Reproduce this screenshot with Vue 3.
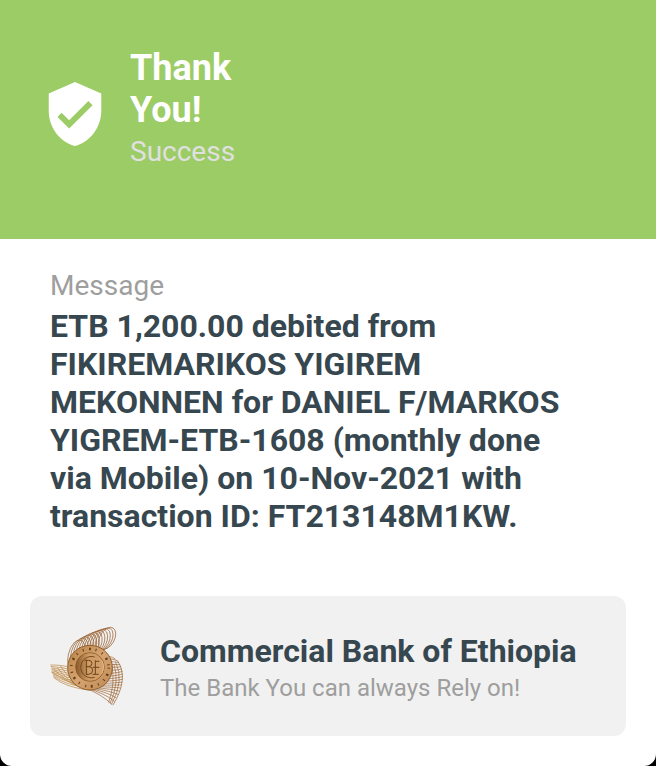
<script setup>
const mix = (a, b, t) => a + (b - a) * t
const steps = (n) => Array.from({ length: n }, (_, i) => i / (n - 1))

// Upper coil: overlapping tilted loops that climb to the right
const coil = steps(12).map((t) => {
  const cx = mix(110, 201, t)
  const cy = mix(122, 70, t) - 22 * t * (1 - t)
  return {
    cx,
    cy,
    rx: mix(25, 22, t),
    ry: mix(48, 36, t),
    turn: `rotate(${mix(14, 30, t)} ${cx} ${cy})`
  }
})

// Right fan: strands from the coin's rim to a curved outer edge
const rightFan = steps(18).map((t) => {
  const a = mix(-0.6, 1.9, t)
  const x = 150 + 62 * Math.cos(a)
  const y = 158 + 62 * Math.sin(a)
  const u = 1 - t
  const ex = u * u * 226 + 2 * u * t * 276 + t * t * 217
  const ey = u * u * 132 + 2 * u * t * 176 + t * t * 270
  return `M${x} ${y}Q${mix(x, ex, 0.6) + 5} ${mix(y, ey, 0.4)} ${ex} ${ey}`
})
const rightWeave = steps(4).map(
  (t) => `M${mix(232, 216, t)} ${mix(136, 152, t)}Q${mix(268, 226, t)} ${mix(190, 206, t)} ${mix(219, 206, t)} ${mix(270, 262, t)}`
)

// Left fan: strands that narrow towards the coin's lower edge
const leftFan = steps(10).map((t) => {
  const sx = 31 + 10 * t
  const sy = mix(150, 188, t)
  return `M${sx} ${sy}Q${mix(72, 78, t)} ${mix(150, 218, t)} ${mix(92, 152, t)} ${mix(158, 226, t)}`
})
const leftWeave = steps(4).map(
  (t) => `M${mix(33, 62, t)} ${mix(170, 153, t)}Q${mix(58, 90, t)} ${mix(186, 200, t)} ${mix(105, 140, t)} ${mix(210, 224, t)}`
)
</script>

<template>
  <main class="receipt">
    <header class="banner">
      <svg class="shield" viewBox="0 0 24 24" aria-hidden="true">
        <path d="M12 1L3 5v6c0 5.55 3.84 10.74 9 12 5.16-1.26 9-6.45 9-12V5l-9-4zm-2 16l-4-4 1.41-1.41L10 14.17l6.59-6.59L18 9l-8 8z" />
      </svg>
      <div class="status">
        <h1>Thank You!</h1>
        <p>Success</p>
      </div>
    </header>

    <section class="message">
      <h2>Message</h2>
      <p>ETB 1,200.00 debited from FIKIREMARIKOS YIGIREM MEKONNEN for DANIEL F/MARKOS YIGREM-ETB-1608 (monthly done via Mobile) on 10-Nov-2021 with transaction ID: FT213148M1KW.</p>
    </section>

    <footer class="bank">
      <svg class="logo" viewBox="30 33 240 240" aria-hidden="true">
        <defs>
          <linearGradient id="coin" x1="0" y1="0" x2="1" y2="1">
            <stop offset="0" stop-color="#b98245" />
            <stop offset="0.5" stop-color="#d6a571" />
            <stop offset="1" stop-color="#bd8752" />
          </linearGradient>
          <linearGradient id="disc" x1="0" y1="0" x2="1" y2="0">
            <stop offset="0" stop-color="#8a5828" />
            <stop offset="0.45" stop-color="#cf9d66" />
            <stop offset="1" stop-color="#d3a06c" />
          </linearGradient>
        </defs>
        <g class="strands">
          <ellipse v-for="(l, i) in coil" :key="i" :cx="l.cx" :cy="l.cy" :rx="l.rx" :ry="l.ry" :transform="l.turn" />
          <path v-for="d in rightFan" :key="d" :d="d" />
          <path v-for="d in rightWeave" :key="d" :d="d" />
          <path v-for="d in leftFan" :key="d" :d="d" class="gold" />
          <path v-for="d in leftWeave" :key="d" :d="d" class="gold" />
        </g>
        <circle cx="150" cy="158" r="67" fill="url(#coin)" stroke="#94602f" stroke-width="3" />
        <circle cx="150" cy="158" r="56" fill="none" stroke="#65401f" stroke-width="8" stroke-dasharray="3 16 6 14 3 18" />
        <circle cx="150" cy="156" r="43" fill="url(#disc)" stroke="#80501f" stroke-width="2" />
        <path d="M164 126A32 32 0 1 0 164 187" fill="none" stroke="#754a1f" stroke-width="3" />
        <path d="M134 136h12q10 0 10 9t-10 10h-8m8 0q12 0 12 11t-12 12h-8M139 136v42M166 136v42M166 139h12M158 157h20M158 178h18" fill="none" stroke="#6c431b" stroke-width="3" />
        <path d="M185 137q11 18 0 39" fill="none" stroke="#e6bd88" stroke-width="3" />
      </svg>
      <div class="about">
        <h2>Commercial Bank of Ethiopia</h2>
        <p>The Bank You can always Rely on!</p>
      </div>
    </footer>
  </main>
</template>

<style>
body {
  margin: 0;
  background: #000;
}
</style>

<style scoped>
.receipt {
  box-sizing: border-box;
  min-height: 100vh;
  padding-bottom: 30px;
  overflow: hidden;
  border-radius: 0 0 12px 12px;
  background: #fff;
  color: #37474f;
  font-family: Roboto, "Liberation Sans", sans-serif;
}

h1,
h2,
p {
  margin: 0;
}

.banner {
  display: flex;
  align-items: center;
  gap: 20px;
  padding: 47px 40px 58px;
  background: #9ccc65;
}

.shield {
  flex: none;
  width: 70px;
  height: 70px;
  fill: #fff;
}

.status {
  max-width: 160px;
  padding-bottom: 8px;
  line-height: 42px;
}

.status h1 {
  color: #fff;
  font-size: 36px;
  font-weight: 700;
}

.status p {
  color: #e0e0e0;
  font-size: 28px;
}

.message {
  padding: 28px 80px 61px 50px;
}

.message h2 {
  margin-bottom: 2px;
  color: #9e9e9e;
  font-size: 28px;
  font-weight: 400;
  line-height: 38px;
}

.message p {
  font-size: 32px;
  font-weight: 700;
  line-height: 38px;
}

.bank {
  display: flex;
  align-items: center;
  gap: 30px;
  margin: 0 30px;
  padding: 30px 20px;
  border-radius: 12px;
  background: #f1f1f1;
}

.logo {
  flex: none;
  width: 80px;
  height: 80px;
}

.strands {
  fill: none;
  stroke: #98602f;
  stroke-width: 2;
}

.strands .gold {
  stroke: #b98238;
}

.about {
  padding-top: 6px;
}

.about h2 {
  font-size: 32px;
  font-weight: 700;
  line-height: 38px;
}

.about p {
  color: #9e9e9e;
  font-size: 24px;
  line-height: 36px;
}
</style>
